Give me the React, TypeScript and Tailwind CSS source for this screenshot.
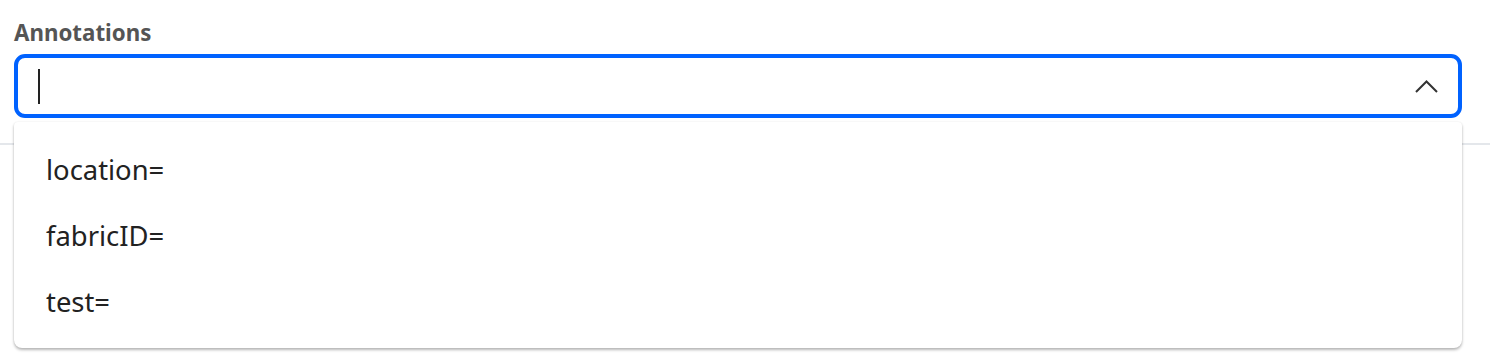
export default function App() {
  const items = ["location=", "fabricID=", "test="];
  return (
    <div className="relative h-[356px] w-[1490px] overflow-hidden bg-white font-['Noto_Sans',sans-serif]">
      <div className="pl-[14px] pr-[28px] pt-[18px]">
        <div className="text-[22.3px] font-bold leading-[30px] text-[#555555]">Annotations</div>
        <div className="mt-[6px] flex h-[64px] items-center rounded-[11px] border-[4px] border-[#0062ff] bg-white pl-[20px] pr-[20px]">
          <div className="h-[35px] w-[2px] bg-[#222222]" />
          <div className="flex-1" />
          <svg width="23" height="13" viewBox="0 0 23 13" fill="none">
            <path d="M1 12 L11.5 1.5 L22 12" stroke="#333333" strokeWidth="2" />
          </svg>
        </div>
      </div>
      <div className="mt-[25px] h-[2px] bg-[#e4e7eb]" />
      <div className="absolute left-[14px] top-[122px] w-[1448px] rounded-b-[8px] rounded-t-[4px] bg-white pb-[13px] pt-[15px] shadow-[0_2px_3px_rgba(0,0,0,0.28),0_0_2px_rgba(0,0,0,0.08)]">
        {items.map((t) => (
          <div key={t} className="flex h-[66px] items-center pl-[32px] text-[27.4px] text-[#222222]">
            {t}
          </div>
        ))}
      </div>
    </div>
  );
}
